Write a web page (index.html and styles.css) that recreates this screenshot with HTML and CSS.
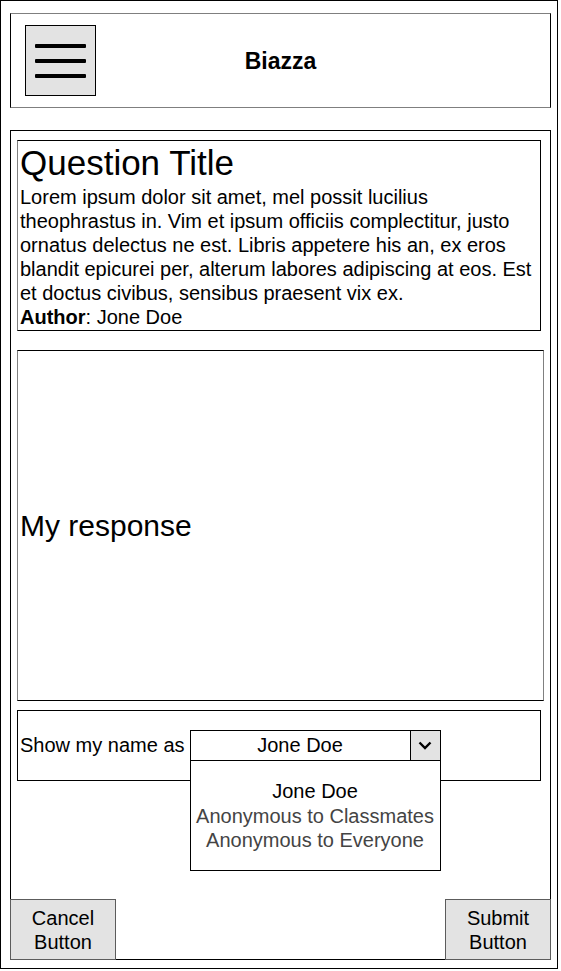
FILE: index.html
```html
<!DOCTYPE html>
<html lang="en">
<head>
<meta charset="utf-8">
<title>Biazza</title>
<link rel="stylesheet" href="styles.css">
</head>
<body>
<div class="frame">
  <header class="topbar">
    <div class="burger">
      <span class="bar"></span>
      <span class="bar"></span>
      <span class="bar"></span>
    </div>
    <div class="brand">Biazza</div>
    <div></div>
  </header>

  <main class="panel">
    <section class="question">
      <h1 class="q-title">Question Title</h1>
      <p class="q-body">Lorem ipsum dolor sit amet, mel possit lucilius theophrastus in. Vim et ipsum officiis complectitur, justo ornatus delectus ne est. Libris appetere his an, ex eros blandit epicurei per, alterum labores adipiscing at eos. Est et doctus civibus, sensibus praesent vix ex.</p>
      <p class="q-author"><b>Author</b>: Jone Doe</p>
    </section>

    <section class="response">My response</section>

    <section class="namebox">
      <span class="name-label">Show my name as</span>
      <div class="select">
        <span class="select-value">Jone Doe</span>
        <span class="select-arrow">
          <svg width="14" height="9" viewBox="0 0 14 9"><path d="M1.5 1.5 L7 7 L12.5 1.5" fill="none" stroke="#000" stroke-width="2.4"/></svg>
        </span>
        <ul class="options">
          <li class="opt opt-active">Jone Doe</li>
          <li class="opt">Anonymous to Classmates</li>
          <li class="opt">Anonymous to Everyone</li>
        </ul>
      </div>
    </section>

    <div class="actions">
      <button class="btn">Cancel<br>Button</button>
      <button class="btn">Submit<br>Button</button>
    </div>
  </main>
</div>
</body>
</html>
```

FILE: styles.css
```css
* { box-sizing: border-box; }
html, body { margin: 0; padding: 0; background: #fff; }
body {
  font-family: "Liberation Sans", Arial, Helvetica, sans-serif;
  color: #000;
  font-size: 20px;
  line-height: 24px;
}
.frame {
  width: 558px;
  height: 969px;
  border: 1px solid #000;
  padding: 12px 0 0 9px;
  display: flex;
  flex-direction: column;
}
.topbar {
  width: 541px;
  height: 95px;
  border-top: 1px solid #7f7f7f;
  border-bottom: 1px solid #7f7f7f;
  border-left: 1px solid #000;
  border-right: 1px solid #000;
  display: grid;
  grid-template-columns: 1fr auto 1fr;
  align-items: center;
  padding-left: 14px;
}
.burger {
  width: 71px;
  height: 71px;
  background: #e3e3e3;
  border: 1px solid #000;
  display: flex;
  flex-direction: column;
  align-items: center;
  padding-top: 18px;
  gap: 11px;
}
.bar {
  display: block;
  width: 51px;
  height: 4px;
  background: #000;
  border-radius: 1px;
}
.brand {
  font-weight: bold;
  font-size: 23px;
  line-height: 28px;
  position: relative;
  left: -7px;
}
.panel {
  margin-top: 22px;
  width: 541px;
  height: 830px;
  border: 1px solid #000;
  display: flex;
  flex-direction: column;
  padding: 9px 0 0 6px;
}
.question {
  width: 524px;
  height: 191px;
  border: 1px solid #000;
  border-left-color: #808080;
  padding: 0 0 0 2px;
}
.q-title {
  margin: 0;
  font-weight: normal;
  font-size: 35px;
  line-height: 44px;
}
.q-body, .q-author { margin: 0; }
.response {
  margin-top: 19px;
  width: 527px;
  height: 351px;
  border: 1px solid #000;
  border-left-color: #808080;
  border-right-color: #808080;
  display: flex;
  align-items: center;
  padding-left: 2px;
  font-size: 30px;
  line-height: 34px;
}
.namebox {
  margin-top: 9px;
  width: 524px;
  height: 71px;
  border: 1px solid #000;
  display: flex;
  align-items: flex-start;
  gap: 5px;
  padding: 19px 0 0 2px;
}
.name-label { line-height: 31px; }
.select {
  position: relative;
  width: 251px;
  height: 31px;
  border: 1px solid #000;
  display: flex;
}
.select-value {
  flex: 1;
  text-align: center;
  line-height: 29px;
}
.select-arrow {
  width: 30px;
  background: #e3e3e3;
  border-left: 1px solid #000;
  display: flex;
  align-items: center;
  justify-content: center;
}
.options {
  position: absolute;
  left: -1px;
  top: 29px;
  width: 251px;
  height: 111px;
  margin: 0;
  padding: 18px 0 0;
  list-style: none;
  background: #fff;
  border: 1px solid #000;
  text-align: center;
  z-index: 2;
}
.opt { color: #444; line-height: 24.5px; }
.opt-active { color: #000; }
.actions {
  margin-top: auto;
  margin-left: -7px;
  margin-right: -1px;
  margin-bottom: -1px;
  display: flex;
  justify-content: space-between;
}
.btn {
  width: 106px;
  height: 61px;
  background: #e3e3e3;
  border: 1px solid #5c5c5c;
  font-family: inherit;
  font-size: 20px;
  line-height: 24px;
  color: #000;
  padding: 0;
  margin: 0;
}
```
